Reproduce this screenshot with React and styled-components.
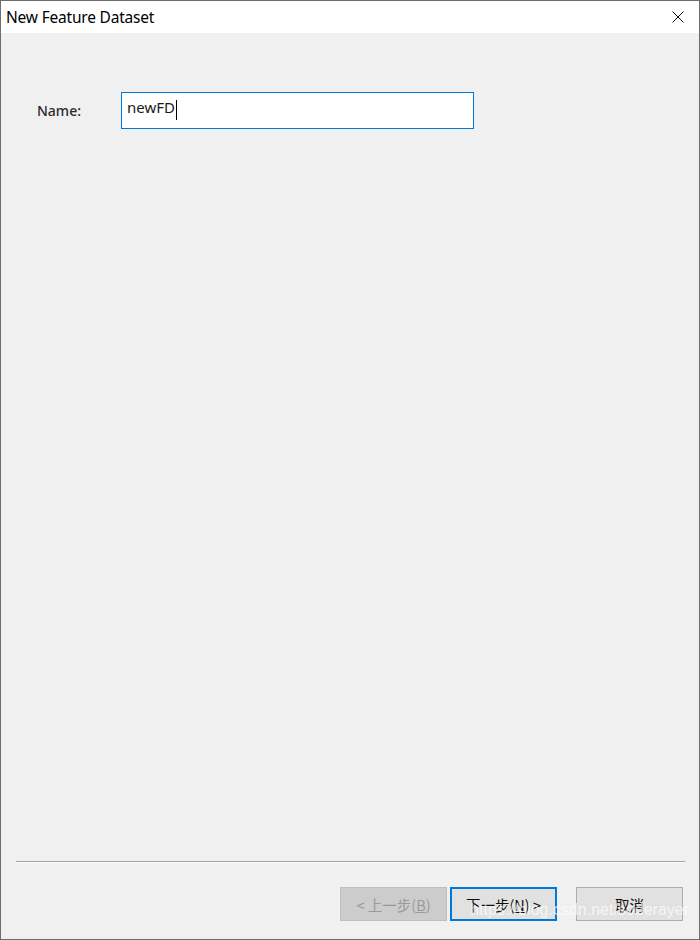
import React from "react";
import styled, { createGlobalStyle } from "styled-components";

const GlobalStyle = createGlobalStyle`
  html, body {
    margin: 0;
    padding: 0;
    background: #f0f0f0;
  }
  * {
    box-sizing: border-box;
  }
`;

const App = () => {
  return (
    <>
      <GlobalStyle />
      <Window>
        <TitleBar>
          <Title>New Feature Dataset</Title>
          <CloseButton aria-label="close">
            <svg width="12" height="12" viewBox="0 0 12 12">
              <path d="M0.5 0.5 L11.5 11.5 M11.5 0.5 L0.5 11.5" stroke="#111" strokeWidth="1" />
            </svg>
          </CloseButton>
        </TitleBar>
        <Body>
          <FieldRow>
            <Label>Name:</Label>
            <TextBox>
              newFD
              <Caret />
            </TextBox>
          </FieldRow>
        </Body>
        <Footer>
          <Separator />
          <ButtonRow>
            <Button disabled>&lt; 上一步(<u>B</u>)</Button>
            <Button $primary>下一步(<u>N</u>) &gt;</Button>
            <Spacer />
            <Button>取消</Button>
          </ButtonRow>
          <Watermark>https://blog.csdn.net/soderayer</Watermark>
        </Footer>
      </Window>
    </>
  );
};

const Window = styled.div`
  width: 700px;
  height: 940px;
  display: flex;
  flex-direction: column;
  border: 1px solid #6d6d6d;
  background: #f0f0f0;
  font-family: "Noto Sans", "Noto Sans CJK SC", sans-serif;
  color: #1a1a1a;
`;

const TitleBar = styled.div`
  height: 32px;
  background: #ffffff;
  display: flex;
  align-items: center;
  justify-content: space-between;
  padding: 0 14px 0 5px;
`;

const Title = styled.div`
  font-size: 15.5px;
  color: #000;
  letter-spacing: -0.2px;
`;

const CloseButton = styled.div`
  width: 14px;
  height: 14px;
  display: flex;
  align-items: center;
  justify-content: center;
`;

const Body = styled.div`
  flex: 1;
  padding: 59px 0 0 36px;
`;

const FieldRow = styled.div`
  display: flex;
  align-items: center;
`;

const Label = styled.div`
  width: 84px;
  font-size: 14px;
  color: #2b2b2b;
  font-weight: 500;
`;

const TextBox = styled.div`
  width: 353px;
  height: 37px;
  background: #fff;
  border: 1px solid #0078d7;
  display: flex;
  align-items: center;
  padding: 0 0 7px 5px;
  font-size: 15px;
  color: #1a1a1a;
  line-height: 1;
`;

const Caret = styled.span`
  display: inline-block;
  width: 1px;
  height: 20px;
  background: #000;
  margin-left: 1px;
  margin-top: 6px;
`;

const Footer = styled.div`
  position: relative;
  padding: 0 15px 18px 15px;
`;

const Separator = styled.div`
  height: 2px;
  border-top: 1px solid #a0a0a0;
  border-bottom: 1px solid #ffffff;
  margin-bottom: 24px;
  margin-right: -1px;
`;

const ButtonRow = styled.div`
  display: flex;
  justify-content: flex-end;
  gap: 3px;
  padding-right: 1px;
`;

const Spacer = styled.div`
  width: 13px;
`;

const Button = styled.div`
  width: 107px;
  height: 34px;
  display: flex;
  align-items: center;
  justify-content: center;
  font-family: "Noto Sans CJK SC", "Noto Sans", sans-serif;
  font-size: 14.5px;
  background: ${(p) => (p.disabled ? "#cccccc" : "#e1e1e1")};
  color: ${(p) => (p.disabled ? "#9a9a9a" : "#111")};
  border: ${(p) =>
    p.$primary ? "2px solid #0078d7" : p.disabled ? "1px solid #bfbfbf" : "1px solid #adadad"};

  u {
    text-decoration: underline;
  }
`;

const Watermark = styled.div`
  position: absolute;
  right: 10px;
  bottom: 20px;
  font-family: "Liberation Sans", sans-serif;
  font-size: 16px;
  color: rgba(255, 255, 255, 0.7);
  pointer-events: none;
`;

export default App;
